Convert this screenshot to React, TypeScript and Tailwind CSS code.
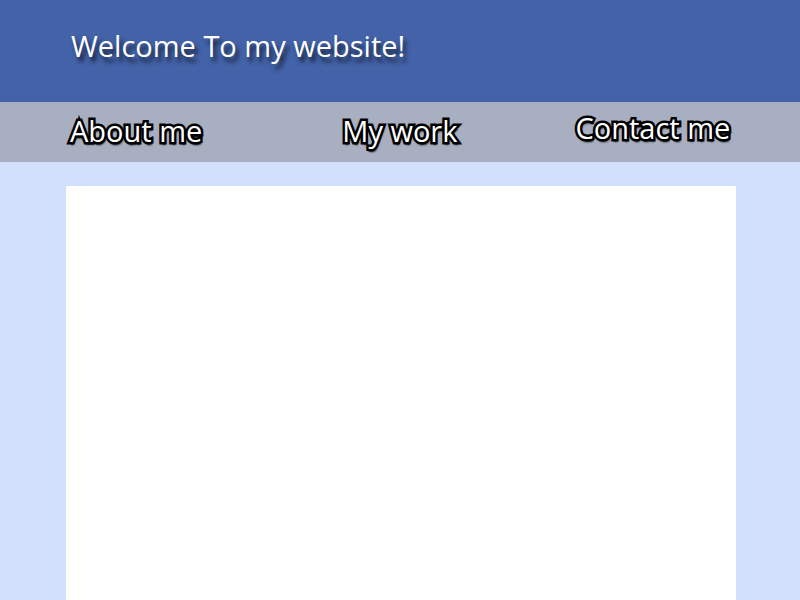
import React from 'react';

const outline =
  '[-webkit-text-stroke:5px_#000] [paint-order:stroke_fill] [text-shadow:1px_3px_2px_#000]';

export default function App() {
  return (
    <div className="min-h-[600px] bg-[#d2dffd] font-['Open_Sans',sans-serif]">
      <header className="h-[102px] bg-[#4362a7] pl-[71px] pt-[26px]">
        <h1 className="text-[29px] leading-[40px] text-white [text-shadow:3px_5px_4px_#15203a]">
          Welcome To my website!
        </h1>
      </header>
      <nav className="h-[60px] bg-[#a8afc1] flex items-start text-white text-[29px]">
        <span className={`ml-[70px] mt-[9px] leading-[40px] ${outline}`}>About me</span>
        <span className={`ml-[140px] mt-[9px] leading-[40px] ${outline}`}>My work</span>
        <span className={`ml-[118px] mt-[6px] leading-[40px] ${outline}`}>Contact me</span>
      </nav>
      <main className="mx-[66px] mt-[24px] w-[670px] h-[414px] bg-white" />
    </div>
  );
}
